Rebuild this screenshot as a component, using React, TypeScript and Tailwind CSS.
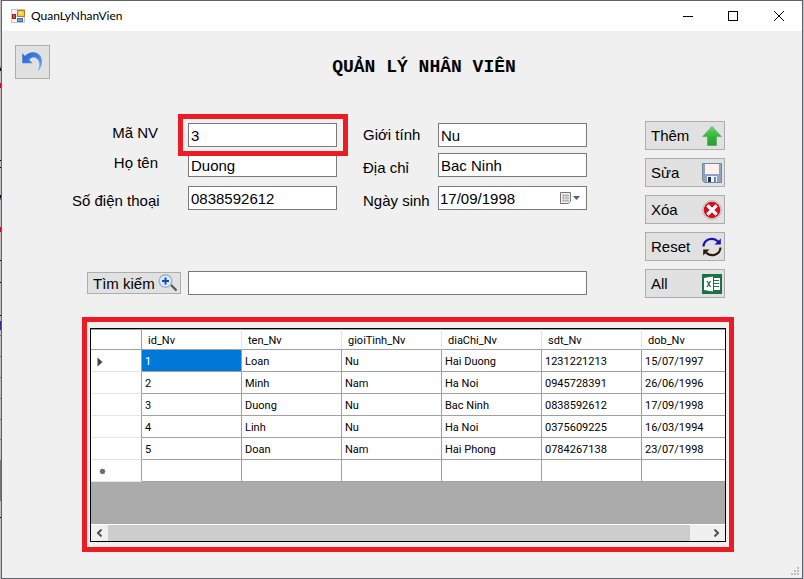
import React from "react";

const rows = [
  ["1", "Loan", "Nu", "Hai Duong", "1231221213", "15/07/1997"],
  ["2", "Minh", "Nam", "Ha Noi", "0945728391", "26/06/1996"],
  ["3", "Duong", "Nu", "Bac Ninh", "0838592612", "17/09/1998"],
  ["4", "Linh", "Nu", "Ha Noi", "0375609225", "16/03/1994"],
  ["5", "Doan", "Nam", "Hai Phong", "0784267138", "23/07/1998"],
  ["", "", "", "", "", ""],
];
const columns = ["id_Nv", "ten_Nv", "gioiTinh_Nv", "diaChi_Nv", "sdt_Nv", "dob_Nv"];

const fieldClass =
  "block h-6 w-full min-w-0 rounded-none border border-[#7a7a7a] bg-white px-[2px] outline-none";
const buttonClass = "flex items-center border border-[#adadad] bg-[#e1e1e1]";

function AppIcon() {
  return (
    <svg width="14" height="14" viewBox="0 0 14 14" aria-hidden="true">
      <rect x="0.5" y="0.5" width="13" height="13" fill="#f4f4f4" stroke="#c4c4c4" />
      <rect x="6.5" y="1.5" width="7" height="6" fill="#fbc93d" stroke="#a9822a" />
      <rect x="8" y="3" width="3" height="2" fill="#ffe79a" />
      <rect x="1.5" y="5.5" width="3" height="4" fill="#e0503c" stroke="#9c1e1a" />
      <rect x="6.5" y="9.5" width="5" height="3" fill="#6ba0f2" stroke="#3a6cc0" />
    </svg>
  );
}

function UndoIcon() {
  return (
    <svg width="21" height="21" viewBox="0 0 21 21" aria-hidden="true">
      <defs>
        <linearGradient id="undo" x1="0" y1="0" x2="1" y2="1">
          <stop offset="0" stopColor="#2a62c8" />
          <stop offset="0.5" stopColor="#3f80e4" />
          <stop offset="1" stopColor="#6cc0f6" />
        </linearGradient>
      </defs>
      <path
        d="M0.300 1.300 L3 4 C5.500 1 8.500 0 11.500 0.200 C16.500 0.500 20 4.500 20 9.500 C20 13.500 18.300 17 15.500 19.800 C17.300 16 18 12.500 17 9.800 C16 6.800 13.700 5.300 11.500 5.300 C9.700 5.300 8.300 6.200 7.300 7.800 L10.500 11.300 L0.300 11.300 Z"
        fill="url(#undo)"
      />
    </svg>
  );
}

function UpArrowIcon() {
  return (
    <svg width="20" height="20" viewBox="0 0 20 20" aria-hidden="true">
      <defs>
        <linearGradient id="up" x1="0" y1="0" x2="0" y2="1">
          <stop offset="0" stopColor="#6ad46a" />
          <stop offset="0.6" stopColor="#2eb136" />
          <stop offset="1" stopColor="#2a9f33" />
        </linearGradient>
      </defs>
      <path d="M10 0.500 L19.300 10.500 H14.500 V19.500 H5.500 V10.500 H0.700 Z" fill="url(#up)" stroke="#58ad5c" strokeWidth="0.8" />
    </svg>
  );
}

function SaveIcon() {
  return (
    <svg width="20" height="20" viewBox="0 0 20 20" aria-hidden="true">
      <path d="M0.500 0.500 H19.500 V19.500 H2.500 L0.500 17.500 Z" fill="#8da3c0" stroke="#7389a8" />
      <rect x="3" y="1" width="14" height="10" fill="#fdf1ec" />
      <rect x="5" y="13" width="10" height="6" fill="#eef2f7" />
      <rect x="6" y="14" width="3" height="5" fill="#22334e" />
      <rect x="12" y="14" width="2" height="5" fill="#7187a6" />
    </svg>
  );
}

function DeleteIcon() {
  return (
    <svg width="20" height="20" viewBox="0 0 20 20" aria-hidden="true">
      <circle cx="10" cy="10" r="9.300" fill="#e9e9e9" stroke="#a3a3a3" strokeWidth="0.8" />
      <circle cx="10" cy="10" r="8.300" fill="#cf1120" />
      <path d="M6.500 6.500 L13.500 13.500 M13.500 6.500 L6.500 13.500" stroke="#fff" strokeWidth="3.200" strokeLinecap="square" />
    </svg>
  );
}

function ResetIcon() {
  return (
    <svg width="20" height="20" viewBox="0 0 20 20" aria-hidden="true">
      <path d="M1.500 9.500 C2 2 11 -0.500 16 4.500" fill="none" stroke="#1414b4" strokeWidth="2.200" />
      <path d="M18.800 1.500 V7.500 H12.500 Z" fill="#1414b4" />
      <path d="M18.500 10.500 C18 18 9 20.500 4 15.500" fill="none" stroke="#2c1a12" strokeWidth="2.200" />
      <path d="M1.200 18.500 V12.500 H7.500 Z" fill="#2c1a12" />
    </svg>
  );
}

function SheetIcon() {
  return (
    <svg width="20" height="20" viewBox="0 0 20 20" aria-hidden="true">
      <rect width="20" height="20" fill="#1b7145" />
      <path d="M2 4 L11 2.500 V17.500 L2 16 Z" fill="#fff" />
      <path d="M12 4 H18 V16 H12 Z" fill="#fff" />
      <path d="M12 6.500 H17 M12 9.500 H17 M12 12.500 H17" stroke="#1b7145" />
      <path d="M5 7 L8.500 13 M8.500 7 L5 13" stroke="#1b7145" strokeWidth="1.300" />
    </svg>
  );
}

function SearchIcon() {
  return (
    <svg width="20" height="18" viewBox="0 0 20 18" aria-hidden="true">
      <path d="M12.500 10.500 L18.500 16.500" stroke="#555" strokeWidth="2.200" />
      <circle cx="7.500" cy="7" r="6.300" fill="#dcecff" stroke="#9fb3cf" strokeWidth="1.400" />
      <path d="M7.500 3.500 V10.500 M4 7 H11" stroke="#1549c4" strokeWidth="2" />
    </svg>
  );
}

function CalendarIcon() {
  return (
    <svg width="22" height="14" viewBox="0 0 22 14" aria-hidden="true">
      <path d="M0.500 1.500 H10.500 V10.500 L8.500 12.500 H0.500 Z" fill="#f3f1f0" stroke="#7d716e" />
      <path d="M2 4.500 H9 M2 7 H9 M2 9.500 H9 M3.500 3 V11 M6 3 V11 M8 3 V11" stroke="#a9b3c2" />
      <path d="M13 5 H20 L16.500 9 Z" fill="#47619a" />
    </svg>
  );
}

function Field({ id, label, value }: { id: string; label: string; value: string }) {
  return <input id={id} aria-label={label} defaultValue={value} className={fieldClass} />;
}

const actions = [
  { label: "Thêm", icon: <UpArrowIcon /> },
  { label: "Sửa", icon: <SaveIcon /> },
  { label: "Xóa", icon: <DeleteIcon /> },
  { label: "Reset", icon: <ResetIcon /> },
  { label: "All", icon: <SheetIcon /> },
];

/* Sliver of whatever sits behind the window, seen along its left edge. */
function BackdropEdge() {
  return (
    <svg className="w-px shrink-0" width="1" height="579" viewBox="0 0 1 579" aria-hidden="true">
      <rect width="1" height="579" fill="#bfbfbf" />
      <path d="M0 66h1v2h-1z" fill="#c88a3c" />
      <path d="M0 68h1v3h-1z M0 160h1v1h-1z M0 167h1v1h-1z M0 195h1v3h-1z M0 260h1v1h-1z M0 282h1v1h-1z M0 315h1v1h-1z M0 517h1v1h-1z" fill="#000" />
      <path d="M0 83h1v5h-1z M0 227h1v5h-1z" fill="#d01020" />
      <path d="M0 198h1v2h-1z" fill="#2f7fd0" />
      <path d="M0 321h1v9h-1z" fill="#2c2f88" />
      <path d="M0 335h1v1h-1z M0 356h1v1h-1z M0 377h1v1h-1z M0 398h1v1h-1z M0 419h1v1h-1z M0 439h1v1h-1z" fill="#777" />
      <path d="M0 460h1v41h-1z" fill="#777" />
    </svg>
  );
}

function TitleBar() {
  return (
    <header className="flex h-[30px] items-center bg-white pl-[9px]">
      <AppIcon />
      <span className="ml-[6px] flex-1 font-['Lato',sans-serif] text-[12px] leading-4">QuanLyNhanVien</span>
      <button aria-label="Minimize" className="flex h-full w-[45px] items-center justify-center">
        <svg width="10" height="10" viewBox="0 0 10 10"><path d="M0 5.500 H10" stroke="#000" /></svg>
      </button>
      <button aria-label="Maximize" className="flex h-full w-[46px] items-center justify-center">
        <svg width="10" height="10" viewBox="0 0 10 10"><rect x="0.500" y="0.500" width="9" height="9" fill="none" stroke="#000" /></svg>
      </button>
      <button aria-label="Close" className="flex h-full w-[46px] items-center justify-center">
        <svg width="10" height="10" viewBox="0 0 10 10"><path d="M0 0 L10 10 M10 0 L0 10" stroke="#000" /></svg>
      </button>
    </header>
  );
}

function DataGrid() {
  return (
    <section className="mr-[68px] ml-20 mt-[19px] border-[5px] border-[#ed1c24] px-[3px] pt-[6px] pb-[5px]">
      <div className="overflow-hidden border border-black bg-[#ababab]">
        <table className="w-[651px] table-fixed border-separate border-spacing-0 bg-white text-left font-['Roboto',sans-serif] text-[11px] leading-4">
          <thead>
            <tr className="h-[21px]">
              <th className="w-[51px] border-t border-r border-b border-[#a0a0a0] p-0" />
              {columns.map((c) => (
                <th key={c} className="w-[100px] border-t border-r border-b border-t-[#a0a0a0] border-r-[#e5e5e5] border-b-[#a0a0a0] pt-[2px] pr-0 pb-0 pl-[6px] font-normal">
                  {c}
                </th>
              ))}
            </tr>
          </thead>
          <tbody>
            {rows.map((r, i) => (
              <tr key={i} className="h-[22px]">
                <th className="border-r border-b border-r-[#a0a0a0] border-b-[#e5e5e5] pt-[2px] pr-0 pb-0 pl-[6px]">
                  {i === 0 && (
                    <svg width="6" height="10" viewBox="0 0 6 10"><path d="M0.500 0.500 L5.500 5 L0.500 9.500 Z" fill="#444" /></svg>
                  )}
                  {i === rows.length - 1 && (
                    <svg className="ml-[2px]" width="7" height="7" viewBox="0 0 7 7">
                      <circle cx="3.500" cy="3.500" r="2.400" fill="#444" />
                      <path d="M3.500 0.500 V6.500 M0.500 3.500 H6.500 M1.200 1.200 L5.800 5.800 M5.800 1.200 L1.200 5.800" stroke="#777" strokeWidth="0.700" />
                    </svg>
                  )}
                </th>
                {r.map((cell, j) => (
                  <td
                    key={j}
                    className={
                      i === 0 && j === 0
                        ? "border-r border-b border-[#a0a0a0] bg-[#0078d7] pt-[2px] pr-0 pb-0 pl-[3px] text-white"
                        : "border-r border-b border-[#a0a0a0] pt-[2px] pr-0 pb-0 pl-[3px]"
                    }
                  >
                    {cell}
                  </td>
                ))}
              </tr>
            ))}
          </tbody>
        </table>
        <div className="h-[42px]" />
        <div className="flex h-[17px] border-t border-white bg-[#f0f0f0]">
          <button aria-label="Scroll left" className="flex w-[17px] items-center justify-center">
            <svg width="7" height="8" viewBox="0 0 7 8"><path d="M5.500 0.500 L2 4 L5.500 7.500" fill="none" stroke="#505050" strokeWidth="2" /></svg>
          </button>
          <div className="flex flex-1">
            <div className="h-full w-[97%] bg-[#cdcdcd]" />
          </div>
          <button aria-label="Scroll right" className="flex w-[17px] items-center justify-center">
            <svg width="7" height="8" viewBox="0 0 7 8"><path d="M1.500 0.500 L5 4 L1.500 7.500" fill="none" stroke="#505050" strokeWidth="2" /></svg>
          </button>
        </div>
      </div>
    </section>
  );
}

export default function App() {
  return (
    <div className="flex min-h-screen bg-[#bfc3cb] pr-px text-black">
      <BackdropEdge />
      <div className="flex min-w-0 flex-1 flex-col border border-[#5f6269] bg-[#f0f0f0]">
        <TitleBar />
        <div className="flex items-end pt-[14px] pr-1 pl-[13px]">
          <button aria-label="Undo" className={buttonClass + " h-[34px] w-[35px] justify-center"}>
            <UndoIcon />
          </button>
          <h1 className="flex-1 text-center font-['Liberation_Mono',monospace] text-[18px] leading-6 font-bold">
            QUẢN LÝ NHÂN VIÊN
          </h1>
        </div>
        <form className="mt-[42px] flex items-start gap-[58px] pr-[77px] pl-[70px] font-['Liberation_Sans',sans-serif] text-[15px] leading-5">
          <div className="min-w-0 flex-1 pt-[2px]">
            <div className="grid grid-cols-[116px_minmax(0,1fr)_101px_minmax(0,1fr)] items-start">
              <div className="flex flex-col gap-[10px] pr-[30px] text-right whitespace-nowrap">
                <label htmlFor="ma">Mã NV</label>
                <label htmlFor="ten">Họ tên</label>
                <label htmlFor="sdt" className="pt-2">Số điện thoại</label>
              </div>
              <div className="flex flex-col gap-[6px]">
                <div className="relative">
                  <Field id="ma" label="Mã NV" value="3" />
                  <div className="pointer-events-none absolute -top-[9px] -right-[11px] -bottom-[9px] -left-[10px] border-[5px] border-[#ed1c24]" />
                </div>
                <Field id="ten" label="Họ tên" value="Duong" />
                <div className="pt-[3px]">
                  <Field id="sdt" label="Số điện thoại" value="0838592612" />
                </div>
              </div>
              <div className="flex flex-col gap-[13px] pt-[2px] pl-[26px] whitespace-nowrap">
                <label htmlFor="gt">Giới tính</label>
                <label htmlFor="dc">Địa chỉ</label>
                <label htmlFor="ns">Ngày sinh</label>
              </div>
              <div className="flex flex-col gap-[6px]">
                <Field id="gt" label="Giới tính" value="Nu" />
                <Field id="dc" label="Địa chỉ" value="Bac Ninh" />
                <div className="pt-[3px]">
                  <div className="flex h-6 items-center border border-[#7a7a7a] bg-white pr-1">
                    <input id="ns" defaultValue="17/09/1998" className="h-full min-w-0 flex-1 bg-transparent pl-px outline-none" />
                    <button type="button" aria-label="Open calendar"><CalendarIcon /></button>
                  </div>
                </div>
              </div>
            </div>
            <div className="mt-[60px] flex items-center gap-[7px] pl-[15px]">
              <button type="button" className={buttonClass + " h-[22px] w-[94px] justify-between pr-[2px] pl-[5px]"}>
                <span className="pt-[2px]">Tìm kiếm</span>
                <SearchIcon />
              </button>
              <input aria-label="Tìm kiếm" className="h-6 min-w-0 flex-1 border border-[#7a7a7a] bg-white px-[2px] outline-none" />
            </div>
          </div>
          <div className="flex w-20 flex-col gap-2">
            {actions.map((a) => (
              <button key={a.label} type="button" className={buttonClass + " h-[29px] justify-between pr-[2px] pl-[5px]"}>
                {a.label}
                {a.icon}
              </button>
            ))}
          </div>
        </form>
        <DataGrid />
        <footer className="mt-auto flex justify-end p-[2px]">
          <svg width="9" height="9" viewBox="0 0 9 9" aria-hidden="true">
            <path d="M6 0h2v2h-2z M3 3h2v2h-2z M6 3h2v2h-2z M0 6h2v2h-2z M3 6h2v2h-2z M6 6h2v2h-2z" fill="#bfbfbf" />
          </svg>
        </footer>
      </div>
    </div>
  );
}
